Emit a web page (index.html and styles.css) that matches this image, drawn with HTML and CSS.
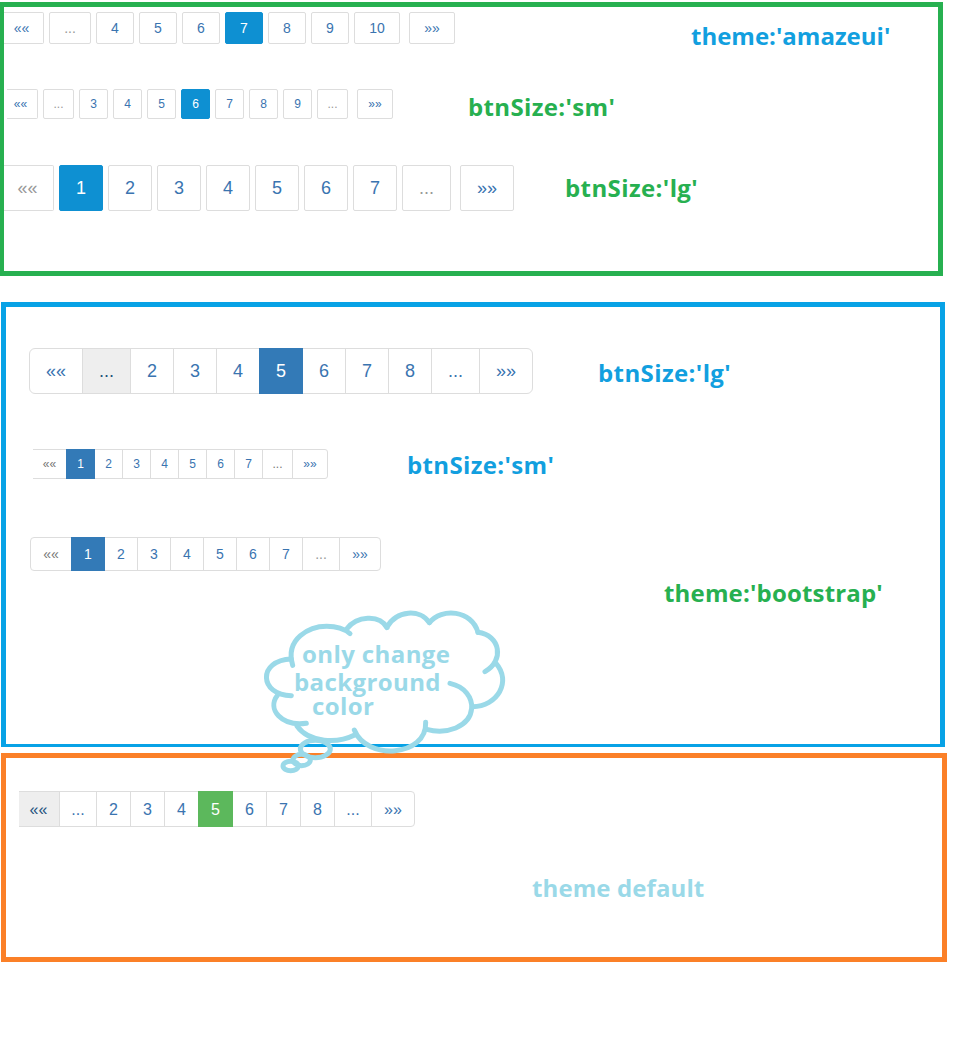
FILE: index.html
```html
<!DOCTYPE html>
<html lang="en">
<head>
<meta charset="utf-8">
<title>Pagination themes</title>
<link rel="stylesheet" href="styles.css">
</head>
<body>
<main class="board">
  <section class="panel panel-amaze">
    <div class="row amaze-md">
      <ul class="pager spaced"><li class="first">««</li><li class="dots muted">...</li><li>4</li><li>5</li><li>6</li><li class="active">7</li><li>8</li><li>9</li><li class="wide">10</li><li class="last">»»</li></ul>
      <p class="label blue label-amaze">theme:'amazeui'</p>
    </div>
    <div class="row amaze-sm">
      <ul class="pager spaced"><li class="first">««</li><li class="dots muted">...</li><li>3</li><li>4</li><li>5</li><li class="active">6</li><li>7</li><li>8</li><li>9</li><li class="dots muted">...</li><li class="last">»»</li></ul>
      <p class="label green size-sm">btnSize:'sm'</p>
    </div>
    <div class="row amaze-lg">
      <ul class="pager spaced"><li class="first muted">««</li><li class="active">1</li><li>2</li><li>3</li><li>4</li><li>5</li><li>6</li><li>7</li><li class="dots muted">...</li><li class="last">»»</li></ul>
      <p class="label green size-lg">btnSize:'lg'</p>
    </div>
  </section>

  <section class="panel panel-boot">
    <div class="row boot-lg">
      <ul class="pager joined"><li class="first">««</li><li class="dots hover">...</li><li>2</li><li>3</li><li>4</li><li class="active">5</li><li>6</li><li>7</li><li>8</li><li class="dots">...</li><li class="last">»»</li></ul>
      <p class="label blue size-lg">btnSize:'lg'</p>
    </div>
    <div class="row boot-sm">
      <ul class="pager joined"><li class="first disabled">««</li><li class="active">1</li><li>2</li><li>3</li><li>4</li><li>5</li><li>6</li><li>7</li><li class="dots disabled">...</li><li class="last">»»</li></ul>
      <p class="label blue size-sm">btnSize:'sm'</p>
    </div>
    <div class="row boot-md">
      <ul class="pager joined"><li class="first disabled">««</li><li class="active">1</li><li>2</li><li>3</li><li>4</li><li>5</li><li>6</li><li>7</li><li class="dots muted">...</li><li class="last">»»</li></ul>
    </div>
    <p class="label green label-boot">theme:'bootstrap'</p>
  </section>

  <section class="panel panel-default">
    <div class="row default-md">
      <ul class="pager joined"><li class="first hover">««</li><li class="dots">...</li><li>2</li><li>3</li><li>4</li><li class="active">5</li><li>6</li><li>7</li><li>8</li><li class="dots">...</li><li class="last">»»</li></ul>
    </div>
    <p class="label aqua label-default">theme default</p>
  </section>

  <aside class="cloud">
    <svg class="cloud-shape" viewBox="0 0 810 555" aria-hidden="true">
      <path d="M128 196C104 115 180 79 230 79C264 79 285 88 300 101"/>
      <path d="M290 87C320 48 388 42 411 83"/>
      <path d="M411 81C440 30 510 26 538 68"/>
      <path d="M538 68C575 22 665 30 684 97"/>
      <path d="M684 97C751 106 764 181 705 215"/>
      <path d="M738 190C786 245 742 319 668 320"/>
      <path d="M600 250C646 260 667 294 665 325C660 382 588 404 530 388"/>
      <path d="M527 367C531 470 350 483 313 390"/>
      <path d="M314 405C264 430 178 430 141 378"/>
      <path d="M169 370C95 380 49 328 83 285"/>
      <path d="M124 287C27 285 22 181 124 177"/>
      <ellipse cx="196" cy="447" rx="45" ry="26"/>
      <ellipse cx="155" cy="480" rx="26" ry="17"/>
      <ellipse cx="122" cy="498" rx="23" ry="14"/>
    </svg>
    <div class="cloud-text">
      <p class="label aqua line-one">only change</p>
      <p class="label aqua line-two">background</p>
      <p class="label aqua line-three">color</p>
    </div>
  </aside>
</main>
</body>
</html>
```
FILE: styles.css
```css
* { box-sizing: border-box; }
body { margin: 0; background: #fff; font-family: "Liberation Sans", Arial, sans-serif; }
p, ul { margin: 0; padding: 0; }

.board { position: relative; display: flow-root; height: 1062px; }
.panel { border: 5px solid; }
.panel-amaze { width: 943px; height: 274px; margin-top: 2px; padding-top: 5px; border-color: #27b050; border-left-width: 4px; }
.panel-boot { width: 944px; height: 445px; margin: 26px 0 0 1px; padding-top: 41px; border-color: #07a2e6; border-bottom-width: 3px; }
.panel-default { width: 946px; height: 209px; margin: 6px 0 0 1px; padding-top: 33px; border-color: #fb8028; }

.row { display: flex; align-items: flex-start; height: var(--h); }
.pager { display: flex; list-style: none; font-size: var(--fs); color: #3a74b0; }
.pager li {
  display: flex; flex: none; align-items: center; justify-content: center;
  width: var(--w); height: var(--h); border: 1px solid #ddd; background: #fff;
}
.pager .first, .pager .last { width: var(--edge); }
.pager .dots { width: var(--dots); }
.pager .muted { color: #999; }
.pager .disabled { color: #777; }
.pager .hover { background: #eee; color: #23527c; }
.pager .active { color: #fff; background: var(--on); border-color: var(--on); position: relative; z-index: 1; }

.spaced { gap: 5px; --on: #0e90d2; }
.spaced li { border-radius: 2px; }
.spaced .last { margin-left: 4px; }
.spaced .first { border-left: 0; border-radius: 0 2px 2px 0; }

.joined { --on: #337ab7; }
.joined li + li { margin-left: -1px; }
.joined .first { border-radius: var(--r) 0 0 var(--r); }
.joined .last { border-radius: 0 var(--r) var(--r) 0; }

.amaze-md { --h: 32px; --w: 38px; --dots: 42px; --edge: 46px; --fs: 14px; }
.amaze-md .first { width: 40px; padding-right: 4px; }
.amaze-md .wide { width: 46px; }
.amaze-sm { --h: 30px; --w: 29px; --dots: 31px; --edge: 36px; --fs: 12px; margin: 45px 0 46px 3px; }
.amaze-sm .first { width: 31px; padding-right: 3px; }
.amaze-lg { --h: 46px; --w: 44px; --dots: 49px; --edge: 54px; --fs: 18px; }
.amaze-lg .first { width: 50px; padding-right: 2px; }

.boot-lg { --h: 46px; --w: 44px; --dots: 49px; --edge: 54px; --fs: 18px; --r: 6px; margin-left: 23px; }
.boot-sm { --h: 30px; --w: 29px; --dots: 31px; --edge: 36px; --fs: 12px; --r: 3px; margin: 55px 0 58px 27px; }
.boot-sm .first { width: 34px; padding-right: 0; border-left: 0; border-radius: 0; }
.boot-md { --h: 34px; --w: 34px; --dots: 38px; --edge: 42px; --fs: 14px; --r: 4px; margin-left: 24px; }
.default-md { --h: 36px; --w: 35px; --dots: 38px; --edge: 44px; --fs: 16px; --r: 4px; margin-left: 13px; }
.default-md .pager { --on: #5cb85c; }
.default-md li { padding-top: 2px; }
.default-md .first { width: 41px; padding-right: 1px; border-left: 0; border-radius: 0; }

.label { font: bold 24px/30px "Open Sans", "Noto Sans", sans-serif; white-space: nowrap; }
.size-sm { letter-spacing: 0.35px; }
.size-lg { letter-spacing: 0.4px; }
.blue { color: #129fdf; }
.green { color: #27b050; }
.aqua { color: #9ad9e8; }
.label-amaze { margin: 9px 0 0 236px; }
.amaze-sm .label { margin: 3px 0 0 75px; }
.amaze-lg .label { margin: 8px 0 0 51px; }
.boot-lg .label { margin: 10px 0 0 65px; }
.boot-sm .label { margin: 1px 0 0 79px; }
.label-boot { margin: 7px 0 0 658px; letter-spacing: 0.17px; }
.label-default { margin: 46px 0 0 526px; letter-spacing: 0.1px; }

/* Speech cloud floating over the two lower panels */
.cloud { position: absolute; left: 250px; top: 600px; width: 270px; height: 185px; z-index: 2; }
.cloud-shape { position: absolute; inset: 0; width: 270px; height: 185px; fill: none; stroke: #9ad9e8; stroke-width: 15; stroke-linecap: round; }
.cloud-text { padding-top: 42px; }
.cloud-text .label { line-height: 24px; letter-spacing: 0.4px; }
.line-one { margin-left: 52px; }
.line-two { margin: 4px 0 0 44px; }
.line-three { margin-left: 62px; }
```
